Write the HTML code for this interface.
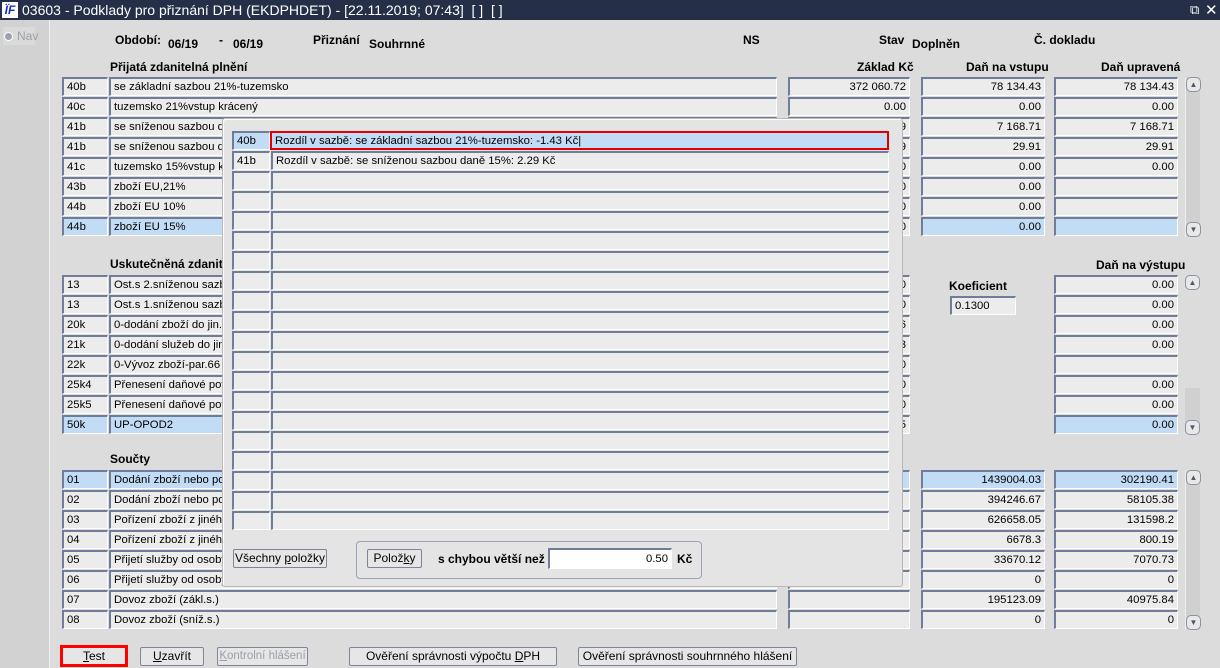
<!DOCTYPE html>
<html style="overflow:hidden;width:1220px;height:668px"><head><meta charset="utf-8">
<style>
*{box-sizing:border-box;margin:0;padding:0}
body{width:1220px;height:668px;overflow:hidden;background:#dcdcdc;font-family:"Liberation Sans",sans-serif;font-size:12px;color:#000;position:relative}
.a{position:absolute;white-space:nowrap}
.tb{left:0;top:0;width:1220px;height:20px;background:#252f48;color:#fff;font-size:14px;line-height:20px;padding-left:22px}
.f{position:absolute;height:19px;background:#ececec;border-top:2px solid #707d9a;border-left:2px solid #707d9a;border-right:1px solid #fff;border-bottom:1px solid #fff;line-height:16px;padding:0 3px;overflow:hidden;white-space:nowrap;font-size:11.3px}
.r{text-align:right}
.s{background:#c2dcf6}
.b{font-weight:bold;font-size:12px}
.btn{position:absolute;height:19px;background:#e6e6e6;border:1px solid #7d8699;border-radius:2px;text-align:center;line-height:17px;font-size:12px;white-space:nowrap;overflow:hidden}
.sb{position:absolute;width:15px;background:#d0d0d0;border-left:1px solid #eee}
.ar{position:absolute;left:0;width:15px;height:15px;border:1px solid #8a93a6;border-radius:5px;background:#e8e8e8;font-size:8px;line-height:13px;text-align:center;color:#556}
</style></head><body>
<div class="a tb">03603 - Podklady pro přiznání DPH (EKDPHDET) - [22.11.2019; 07:43]&nbsp; [ ]&nbsp; [ ]</div>
<div class="a" style="left:2px;top:2px;width:16px;height:16px;background:#fff;color:#1830c0;font:italic bold 12px 'Liberation Sans';line-height:16px;text-align:center">ÏF</div>
<div class="a" style="left:1190px;top:2px;color:#fff;font-size:13px">⧉</div>
<div class="a" style="left:1205px;top:1px;color:#fff;font-size:15px">✕</div>
<div class="a" style="left:0;top:20px;width:50px;height:648px;background:#d2d2d2;border-right:1px solid #f0f0f0"></div>
<div class="a" style="left:3px;top:27px;width:32px;height:18px;background:#dadada;color:#9aa0aa;line-height:18px;padding-left:14px">Nav</div>
<div class="a" style="left:4px;top:32px;width:9px;height:9px;border-radius:50%;background:#9aa0ac;border:1px solid #fff"></div>

<div class="a b" style="left:115px;top:33px">Období:</div>
<div class="a b" style="left:168px;top:37px">06/19</div>
<div class="a b" style="left:219px;top:33px">-</div>
<div class="a b" style="left:233px;top:37px">06/19</div>
<div class="a b" style="left:313px;top:33px">Přiznání</div>
<div class="a b" style="left:369px;top:37px">Souhrnné</div>
<div class="a b" style="left:743px;top:33px">NS</div>
<div class="a b" style="left:879px;top:33px">Stav</div>
<div class="a b" style="left:912px;top:37px">Doplněn</div>
<div class="a b" style="left:1034px;top:33px">Č. dokladu</div>

<div class="a b" style="left:110px;top:60px">Přijatá zdanitelná plnění</div>
<div class="a b" style="left:857px;top:60px">Základ Kč</div>
<div class="a b" style="left:966px;top:60px">Daň na vstupu</div>
<div class="a b" style="left:1101px;top:60px">Daň upravená</div>

<!-- section 1 -->
<div class="f" style="left:62px;top:77px;width:46px">40b</div><div class="f" style="left:109px;top:77px;width:668px">se základní sazbou 21%-tuzemsko</div><div class="f r" style="left:788px;top:77px;width:122px">372 060.72</div><div class="f r" style="left:921px;top:77px;width:124px">78 134.43</div><div class="f r" style="left:1054px;top:77px;width:124px">78 134.43</div>
<div class="f" style="left:62px;top:97px;width:46px">40c</div><div class="f" style="left:109px;top:97px;width:668px">tuzemsko 21%vstup krácený</div><div class="f r" style="left:788px;top:97px;width:122px">0.00</div><div class="f r" style="left:921px;top:97px;width:124px">0.00</div><div class="f r" style="left:1054px;top:97px;width:124px">0.00</div>
<div class="f" style="left:62px;top:117px;width:46px">41b</div><div class="f" style="left:109px;top:117px;width:668px">se sníženou sazbou daně 15%</div><div class="f r" style="left:788px;top:117px;width:122px">1 234.59</div><div class="f r" style="left:921px;top:117px;width:124px">7 168.71</div><div class="f r" style="left:1054px;top:117px;width:124px">7 168.71</div>
<div class="f" style="left:62px;top:137px;width:46px">41b</div><div class="f" style="left:109px;top:137px;width:668px">se sníženou sazbou daně 10%</div><div class="f r" style="left:788px;top:137px;width:122px">299.09</div><div class="f r" style="left:921px;top:137px;width:124px">29.91</div><div class="f r" style="left:1054px;top:137px;width:124px">29.91</div>
<div class="f" style="left:62px;top:157px;width:46px">41c</div><div class="f" style="left:109px;top:157px;width:668px">tuzemsko 15%vstup krácený</div><div class="f r" style="left:788px;top:157px;width:122px">0.00</div><div class="f r" style="left:921px;top:157px;width:124px">0.00</div><div class="f r" style="left:1054px;top:157px;width:124px">0.00</div>
<div class="f" style="left:62px;top:177px;width:46px">43b</div><div class="f" style="left:109px;top:177px;width:668px">zboží EU,21%</div><div class="f r" style="left:788px;top:177px;width:122px">0.00</div><div class="f r" style="left:921px;top:177px;width:124px">0.00</div><div class="f" style="left:1054px;top:177px;width:124px"></div>
<div class="f" style="left:62px;top:197px;width:46px">44b</div><div class="f" style="left:109px;top:197px;width:668px">zboží EU 10%</div><div class="f r" style="left:788px;top:197px;width:122px">0.00</div><div class="f r" style="left:921px;top:197px;width:124px">0.00</div><div class="f" style="left:1054px;top:197px;width:124px"></div>
<div class="f s" style="left:62px;top:217px;width:46px">44b</div><div class="f s" style="left:109px;top:217px;width:668px">zboží EU 15%</div><div class="f r" style="left:788px;top:217px;width:122px">0.00</div><div class="f r s" style="left:921px;top:217px;width:124px">0.00</div><div class="f s" style="left:1054px;top:217px;width:124px"></div>
<div class="sb" style="left:1185px;top:77px;height:160px"><div class="ar" style="top:0">▲</div><div class="ar" style="top:145px">▼</div></div>

<!-- section 2 -->
<div class="a b" style="left:110px;top:257px">Uskutečněná zdanitelná plnění</div>
<div class="a b" style="left:1096px;top:258px">Daň na výstupu</div>
<div class="a b" style="left:949px;top:279px">Koeficient</div>
<div class="f" style="left:950px;top:296px;width:66px">0.1300</div>
<div class="f" style="left:62px;top:275px;width:46px">13</div><div class="f" style="left:109px;top:275px;width:668px">Ost.s 2.sníženou sazbou</div><div class="f r" style="left:788px;top:275px;width:122px">0.00</div><div class="f r" style="left:1054px;top:275px;width:124px">0.00</div>
<div class="f" style="left:62px;top:295px;width:46px">13</div><div class="f" style="left:109px;top:295px;width:668px">Ost.s 1.sníženou sazbou</div><div class="f r" style="left:788px;top:295px;width:122px">0.00</div><div class="f r" style="left:1054px;top:295px;width:124px">0.00</div>
<div class="f" style="left:62px;top:315px;width:46px">20k</div><div class="f" style="left:109px;top:315px;width:668px">0-dodání zboží do jin.čl.</div><div class="f r" style="left:788px;top:315px;width:122px">1236</div><div class="f r" style="left:1054px;top:315px;width:124px">0.00</div>
<div class="f" style="left:62px;top:335px;width:46px">21k</div><div class="f" style="left:109px;top:335px;width:668px">0-dodání služeb do jin.čl.</div><div class="f r" style="left:788px;top:335px;width:122px">1233</div><div class="f r" style="left:1054px;top:335px;width:124px">0.00</div>
<div class="f" style="left:62px;top:355px;width:46px">22k</div><div class="f" style="left:109px;top:355px;width:668px">0-Vývoz zboží-par.66</div><div class="f r" style="left:788px;top:355px;width:122px">0.00</div><div class="f" style="left:1054px;top:355px;width:124px"></div>
<div class="f" style="left:62px;top:375px;width:46px">25k4</div><div class="f" style="left:109px;top:375px;width:668px">Přenesení daňové povinnosti</div><div class="f r" style="left:788px;top:375px;width:122px">0.00</div><div class="f r" style="left:1054px;top:375px;width:124px">0.00</div>
<div class="f" style="left:62px;top:395px;width:46px">25k5</div><div class="f" style="left:109px;top:395px;width:668px">Přenesení daňové povinnosti</div><div class="f r" style="left:788px;top:395px;width:122px">0.00</div><div class="f r" style="left:1054px;top:395px;width:124px">0.00</div>
<div class="f s" style="left:62px;top:415px;width:46px">50k</div><div class="f s" style="left:109px;top:415px;width:668px">UP-OPOD2</div><div class="f r" style="left:788px;top:415px;width:122px">1235</div><div class="f r s" style="left:1054px;top:415px;width:124px">0.00</div>
<div class="sb" style="left:1185px;top:275px;height:160px;background:transparent;border:none"><div class="ar" style="top:0">▲</div><div style="position:absolute;top:113px;width:15px;height:35px;background:#d0d0d0"></div><div class="ar" style="top:145px">▼</div></div>

<!-- section 3 -->
<div class="a b" style="left:110px;top:452px">Součty</div>
<div class="f s" style="left:62px;top:470px;width:46px">01</div><div class="f s" style="left:109px;top:470px;width:668px">Dodání zboží nebo poskytnutí služeb</div><div class="f s" style="left:788px;top:470px;width:122px"></div><div class="f r s" style="left:921px;top:470px;width:124px">1439004.03</div><div class="f r s" style="left:1054px;top:470px;width:124px">302190.41</div>
<div class="f" style="left:62px;top:490px;width:46px">02</div><div class="f" style="left:109px;top:490px;width:668px">Dodání zboží nebo poskytnutí služeb</div><div class="f" style="left:788px;top:490px;width:122px"></div><div class="f r" style="left:921px;top:490px;width:124px">394246.67</div><div class="f r" style="left:1054px;top:490px;width:124px">58105.38</div>
<div class="f" style="left:62px;top:510px;width:46px">03</div><div class="f" style="left:109px;top:510px;width:668px">Pořízení zboží z jiného členského státu</div><div class="f" style="left:788px;top:510px;width:122px"></div><div class="f r" style="left:921px;top:510px;width:124px">626658.05</div><div class="f r" style="left:1054px;top:510px;width:124px">131598.2</div>
<div class="f" style="left:62px;top:530px;width:46px">04</div><div class="f" style="left:109px;top:530px;width:668px">Pořízení zboží z jiného členského státu</div><div class="f" style="left:788px;top:530px;width:122px"></div><div class="f r" style="left:921px;top:530px;width:124px">6678.3</div><div class="f r" style="left:1054px;top:530px;width:124px">800.19</div>
<div class="f" style="left:62px;top:550px;width:46px">05</div><div class="f" style="left:109px;top:550px;width:668px">Přijetí služby od osoby registrované</div><div class="f" style="left:788px;top:550px;width:122px"></div><div class="f r" style="left:921px;top:550px;width:124px">33670.12</div><div class="f r" style="left:1054px;top:550px;width:124px">7070.73</div>
<div class="f" style="left:62px;top:570px;width:46px">06</div><div class="f" style="left:109px;top:570px;width:668px">Přijetí služby od osoby registrované</div><div class="f" style="left:788px;top:570px;width:122px"></div><div class="f r" style="left:921px;top:570px;width:124px">0</div><div class="f r" style="left:1054px;top:570px;width:124px">0</div>
<div class="f" style="left:62px;top:590px;width:46px">07</div><div class="f" style="left:109px;top:590px;width:668px">Dovoz zboží (zákl.s.)</div><div class="f" style="left:788px;top:590px;width:122px"></div><div class="f r" style="left:921px;top:590px;width:124px">195123.09</div><div class="f r" style="left:1054px;top:590px;width:124px">40975.84</div>
<div class="f" style="left:62px;top:610px;width:46px">08</div><div class="f" style="left:109px;top:610px;width:668px">Dovoz zboží (sníž.s.)</div><div class="f" style="left:788px;top:610px;width:122px"></div><div class="f r" style="left:921px;top:610px;width:124px">0</div><div class="f r" style="left:1054px;top:610px;width:124px">0</div>
<div class="sb" style="left:1185px;top:470px;height:160px"><div class="ar" style="top:0">▲</div><div class="ar" style="top:145px">▼</div></div>

<!-- bottom buttons -->
<div class="btn" style="left:60px;top:645px;width:68px;height:22px;border:3px solid #f00;border-radius:0;line-height:16px"><u>T</u>est</div>
<div class="btn" style="left:140px;top:647px;width:64px"><u>U</u>zavřít</div>
<div class="btn" style="left:217px;top:647px;width:91px;color:#9aa0aa;font-size:11.5px"><u>K</u>ontrolní hlášení</div>
<div class="btn" style="left:349px;top:647px;width:208px">Ověření správnosti výpočtu <u>D</u>PH</div>
<div class="btn" style="left:578px;top:647px;width:219px">Ověření správnosti souhrnného hlášení</div>

<!-- popup -->
<div class="a" style="left:222px;top:118px;width:681px;height:469px;background:#e4e4e4;border:1px solid #b8b8b8;border-radius:3px;box-shadow:1px 1px 0 #fff inset"></div>
<div class="f s" style="left:232px;top:131px;width:38px">40b</div><div class="f s" style="left:270px;top:131px;width:619px;border:2px solid #e00000">Rozdíl v sazbě: se základní sazbou 21%-tuzemsko: -1.43 Kč|</div>
<div class="f" style="left:232px;top:151px;width:38px">41b</div><div class="f" style="left:271px;top:151px;width:618px">Rozdíl v sazbě: se sníženou sazbou daně 15%: 2.29 Kč</div>
<div class="f" style="left:232px;top:171px;width:38px"></div><div class="f" style="left:271px;top:171px;width:618px"></div>
<div class="f" style="left:232px;top:191px;width:38px"></div><div class="f" style="left:271px;top:191px;width:618px"></div>
<div class="f" style="left:232px;top:211px;width:38px"></div><div class="f" style="left:271px;top:211px;width:618px"></div>
<div class="f" style="left:232px;top:231px;width:38px"></div><div class="f" style="left:271px;top:231px;width:618px"></div>
<div class="f" style="left:232px;top:251px;width:38px"></div><div class="f" style="left:271px;top:251px;width:618px"></div>
<div class="f" style="left:232px;top:271px;width:38px"></div><div class="f" style="left:271px;top:271px;width:618px"></div>
<div class="f" style="left:232px;top:291px;width:38px"></div><div class="f" style="left:271px;top:291px;width:618px"></div>
<div class="f" style="left:232px;top:311px;width:38px"></div><div class="f" style="left:271px;top:311px;width:618px"></div>
<div class="f" style="left:232px;top:331px;width:38px"></div><div class="f" style="left:271px;top:331px;width:618px"></div>
<div class="f" style="left:232px;top:351px;width:38px"></div><div class="f" style="left:271px;top:351px;width:618px"></div>
<div class="f" style="left:232px;top:371px;width:38px"></div><div class="f" style="left:271px;top:371px;width:618px"></div>
<div class="f" style="left:232px;top:391px;width:38px"></div><div class="f" style="left:271px;top:391px;width:618px"></div>
<div class="f" style="left:232px;top:411px;width:38px"></div><div class="f" style="left:271px;top:411px;width:618px"></div>
<div class="f" style="left:232px;top:431px;width:38px"></div><div class="f" style="left:271px;top:431px;width:618px"></div>
<div class="f" style="left:232px;top:451px;width:38px"></div><div class="f" style="left:271px;top:451px;width:618px"></div>
<div class="f" style="left:232px;top:471px;width:38px"></div><div class="f" style="left:271px;top:471px;width:618px"></div>
<div class="f" style="left:232px;top:491px;width:38px"></div><div class="f" style="left:271px;top:491px;width:618px"></div>
<div class="f" style="left:232px;top:511px;width:38px"></div><div class="f" style="left:271px;top:511px;width:618px"></div>
<div class="btn" style="left:233px;top:549px;width:94px">Všechny <u>p</u>oložky</div>
<div class="a" style="left:356px;top:541px;width:346px;height:38px;border:1px solid #9aa3b4;border-radius:4px"></div>
<div class="btn" style="left:367px;top:549px;width:55px">Polož<u>k</u>y</div>
<div class="a b" style="left:438px;top:552px">s chybou větší než</div>
<div class="f r" style="left:548px;top:548px;width:124px;height:21px;background:#fff;line-height:18px">0.50</div>
<div class="a b" style="left:677px;top:552px">Kč</div>
</body></html>
